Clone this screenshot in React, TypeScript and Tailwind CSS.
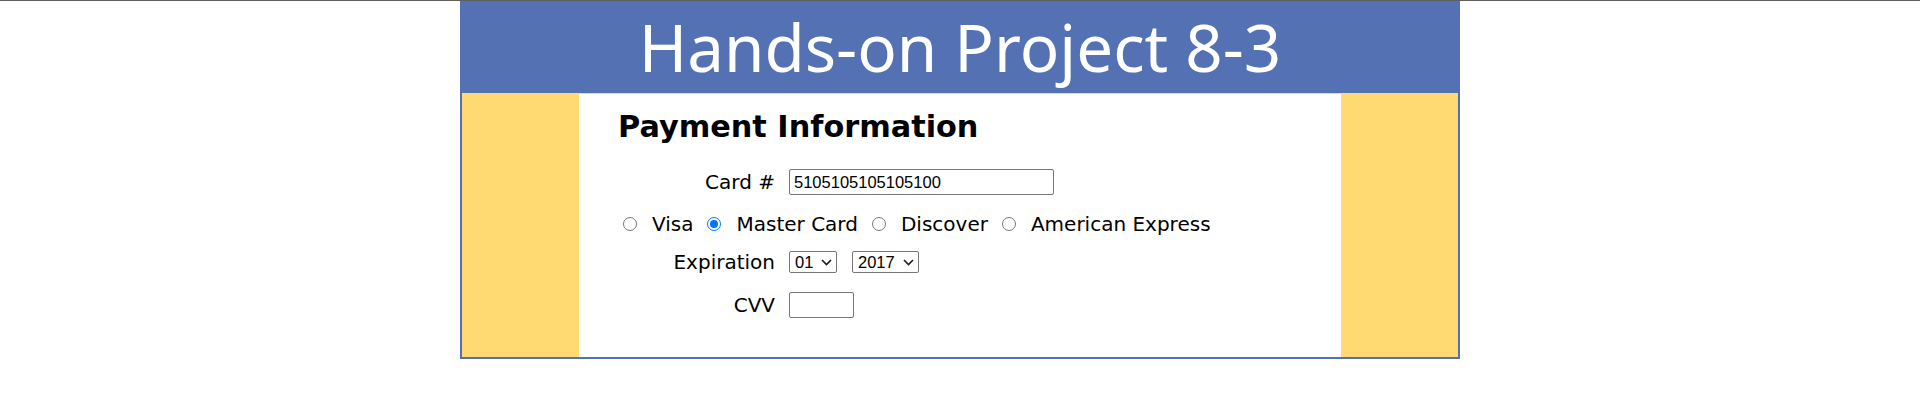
export default function App() {
  return (
    <div className="min-h-screen bg-white">
      {/* top rule */}
      <div className="h-px bg-[#5f5f5f]" />

      <div className="w-[1000px] mx-auto border-2 border-[#5472b3]">
        {/* Header */}
        <header className="h-[90px] bg-[#5472b3] text-center">
          <h1 className="font-['Noto_Sans',sans-serif] text-[65.5px] leading-[88px] text-white">
            Hands-on Project 8-3
          </h1>
        </header>

        {/* Body */}
        <div className="flex bg-[#ffd972] h-[264px]">
          <div className="w-[117px]" />
          <section className="flex-1 mt-px bg-white pl-[39px] font-['DejaVu_Sans',sans-serif] text-[20px] text-black">
            <h2 className="mt-[15px] text-[30.3px] leading-[36px] font-bold">Payment Information</h2>

            <div className="mt-[24px] flex items-center h-[26px] leading-[26px]">
              <label className="w-[157px] text-right">Card #</label>
              <div className="ml-[14px] w-[265px] h-[26px] border border-[#767676] rounded-[2px] pl-[4px] flex items-center font-['Liberation_Sans',sans-serif] text-[16.5px]">
                5105105105105100
              </div>
            </div>

            <div className="mt-[16px] flex items-center h-[26px] leading-[26px] pl-[5px]">
              <Radio />
              <span className="ml-[15px] mr-[14px]">Visa</span>
              <Radio checked />
              <span className="ml-[15px] mr-[14px]">Master Card</span>
              <Radio />
              <span className="ml-[15px] mr-[14px]">Discover</span>
              <Radio />
              <span className="ml-[15px]">American Express</span>
            </div>

            <div className="mt-[12px] flex items-center h-[26px] leading-[26px]">
              <label className="w-[157px] text-right">Expiration</label>
              <div className="ml-[14px] flex items-center gap-[15px]">
                <Select value="01" width="w-[48px]" />
                <Select value="2017" width="w-[67px]" />
              </div>
            </div>

            <div className="mt-[17px] flex items-center h-[26px] leading-[26px]">
              <label className="w-[157px] text-right">CVV</label>
              <div className="ml-[14px] w-[65px] h-[26px] border border-[#767676] rounded-[2px]" />
            </div>
          </section>
          <div className="w-[117px]" />
        </div>
      </div>
    </div>
  );
}

function Radio({ checked }: { checked?: boolean }) {
  if (checked) {
    return (
      <span className="w-[14px] h-[14px] shrink-0 rounded-full border border-[#0075ff] bg-white flex items-center justify-center">
        <span className="w-[8px] h-[8px] rounded-full bg-[#0075ff]" />
      </span>
    );
  }
  return <span className="w-[14px] h-[14px] shrink-0 rounded-full border border-[#767676] bg-white" />;
}

function Select({ value, width }: { value: string; width: string }) {
  return (
    <div
      className={`${width} h-[22px] border border-[#767676] rounded-[2px] flex items-center justify-between pl-[5px] pr-[4px] font-['Liberation_Sans',sans-serif] text-[16.5px] leading-[20px]`}
    >
      <span>{value}</span>
      <svg width="11" height="7" viewBox="0 0 11 7" fill="none">
        <path d="M1 1l4.5 4.5L10 1" stroke="#1a1a1a" strokeWidth="1.6" />
      </svg>
    </div>
  );
}
